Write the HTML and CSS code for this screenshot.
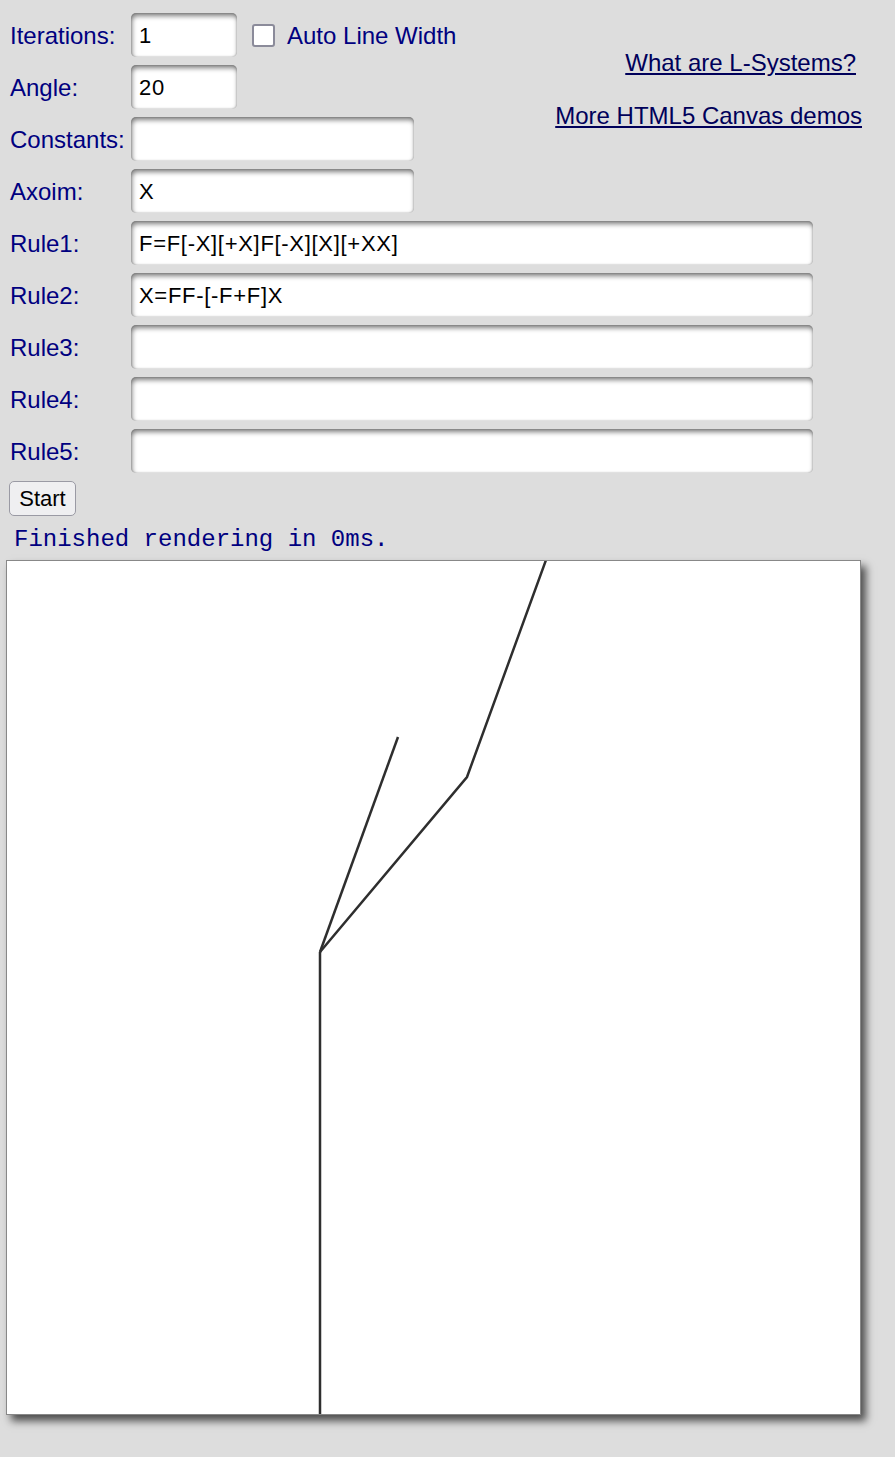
FILE: index.html
```html
<!DOCTYPE html>
<html>
<head>
<meta charset="utf-8">
<title>L-Systems</title>
<link rel="stylesheet" href="styles.css">
</head>
<body>
<div class="page">
  <div class="form">
    <label class="lbl r1">Iterations:</label>
    <div class="ctl r1 iter-row">
      <input class="field small" type="text" value="1">
      <span class="check"></span>
      <span class="check-label">Auto Line Width</span>
    </div>
    <div class="links">
      <a class="link first" href="#">What are L-Systems?</a>
      <a class="link" href="#">More HTML5 Canvas demos</a>
    </div>

    <label class="lbl r2">Angle:</label>
    <input class="field small ctl r2" type="text" value="20">

    <label class="lbl r3">Constants:</label>
    <input class="field medium ctl r3" type="text" value="">

    <label class="lbl r4">Axoim:</label>
    <input class="field medium ctl r4" type="text" value="X">

    <label class="lbl r5">Rule1:</label>
    <input class="field wide ctl r5" type="text" value="F=F[-X][+X]F[-X][X][+XX]">

    <label class="lbl r6">Rule2:</label>
    <input class="field wide ctl r6" type="text" value="X=FF-[-F+F]X">

    <label class="lbl r7">Rule3:</label>
    <input class="field wide ctl r7" type="text" value="">

    <label class="lbl r8">Rule4:</label>
    <input class="field wide ctl r8" type="text" value="">

    <label class="lbl r9">Rule5:</label>
    <input class="field wide ctl r9" type="text" value="">
  </div>
  <button class="start">Start</button>
  <div class="status">Finished rendering in 0ms.</div>
  <div class="canvas">
    <svg width="853" height="853" viewBox="0 0 853 853">
      <polyline class="branch" points="313,853 313,622 313,391" />
      <polyline class="branch" points="313,391 391,176" />
      <polyline class="branch" points="313,391 460,216 539,-1" />
    </svg>
  </div>
</div>
</body>
</html>
```

FILE: styles.css
```css
html, body {
  margin: 0;
  padding: 0;
  background: #dddddd;
}

body {
  font-family: "Liberation Sans", Arial, sans-serif;
  height: 1457px;
}

.page {
  padding-top: 13px;
}

.form {
  display: grid;
  grid-template-columns: 121px 1fr;
  grid-auto-rows: 44px;
  row-gap: 8px;
  width: 852px;
  padding-left: 10px;
}

.lbl {
  grid-column: 1;
  align-self: center;
  font-size: 24px;
  color: #000080;
  line-height: 28px;
  padding-top: 2px;
}

.ctl {
  grid-column: 2;
  justify-self: start;
}

.r1 { grid-row: 1; }
.r2 { grid-row: 2; }
.r3 { grid-row: 3; }
.r4 { grid-row: 4; }
.r5 { grid-row: 5; }
.r6 { grid-row: 6; }
.r7 { grid-row: 7; }
.r8 { grid-row: 8; }
.r9 { grid-row: 9; }

.iter-row {
  display: flex;
  align-items: center;
  height: 44px;
}

.field {
  box-sizing: border-box;
  height: 44px;
  border: none;
  border-radius: 5px;
  background: #ffffff;
  box-shadow: inset 1px 3px 5px rgba(0, 0, 0, 0.5), inset 0 0 2px rgba(0, 0, 0, 0.3);
  padding: 2px 0 0 8px;
  margin: 0;
  font-family: "Liberation Sans", Arial, sans-serif;
  font-size: 22px;
  letter-spacing: 0.7px;
  color: #000;
  outline: none;
}

.small { width: 106px; }
.medium { width: 283px; }
.wide { width: 682px; }

.check {
  box-sizing: border-box;
  width: 23px;
  height: 23px;
  margin-left: 15px;
  border: 2px solid #8b8b9a;
  border-radius: 3px;
  background: #ffffff;
}

.check-label {
  margin-left: 12px;
  font-size: 24px;
  color: #000080;
  line-height: 28px;
  padding-top: 2px;
}

.links {
  grid-column: 2;
  grid-row: 1 / 4;
  justify-self: end;
  display: flex;
  flex-direction: column;
  align-items: flex-end;
  padding-top: 36px;
  gap: 25px;
}

.link {
  font-size: 24px;
  line-height: 28px;
  color: #00005a;
  text-decoration: underline;
}

.link.first {
  margin-right: 6px;
}

.start {
  display: block;
  box-sizing: border-box;
  margin: 8px 0 0 9px;
  width: 67px;
  height: 35px;
  padding: 0;
  border: 1px solid #9a9aa4;
  border-radius: 5px;
  background: #efeff1;
  font-family: "Liberation Sans", Arial, sans-serif;
  font-size: 22px;
  color: #000;
}

.status {
  margin-top: 10px;
  padding-left: 14px;
  font-family: "Liberation Mono", "Courier New", monospace;
  font-size: 24px;
  line-height: 28px;
  color: #000080;
}

.canvas {
  margin: 6px 0 0 6px;
  width: 853px;
  height: 853px;
  border: 1px solid #888888;
  background: #ffffff;
  box-shadow: 5px 6px 8px rgba(0, 0, 0, 0.65);
}

.canvas svg {
  display: block;
}

.branch {
  fill: none;
  stroke: #2e2e2e;
  stroke-width: 2.5;
  stroke-linejoin: miter;
}
```
